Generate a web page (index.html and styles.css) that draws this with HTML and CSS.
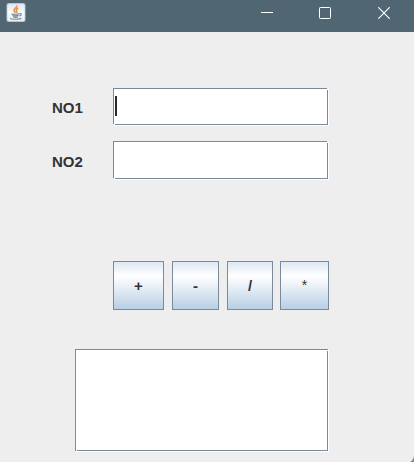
FILE: index.html
```html
<!DOCTYPE html>
<html lang="en">
<head>
<meta charset="utf-8">
<title>Calculator</title>
<link rel="stylesheet" href="styles.css">
</head>
<body>
<div class="window">
  <header class="titlebar">
    <svg class="app-icon" width="20" height="20" viewBox="0 0 20 20">
      <defs><linearGradient id="tile" x1="0" y1="0" x2="0" y2="1"><stop offset="0" stop-color="#dfe6ec"/><stop offset=".5" stop-color="#fafbfc"/><stop offset="1" stop-color="#e8ebed"/></linearGradient></defs>
      <rect x="1" y=".5" width="18" height="18" rx="1.5" fill="url(#tile)" stroke="#bfd0db" stroke-width=".8"/>
      <path d="M10.800 2.500c1 2-3 3-2.800 5 .1 1 1.200 1.500 1.500 2.300M12.300 5.300c-2 .9-2.600 1.900-1.500 3.300.4.5.1.9-.3 1.300" fill="none" stroke="#e8914a" stroke-width="1.600"/>
      <path d="M5.800 10.700c-.5.800 7 .8 7.700 0M6.500 12.300c1.500.8 4.800.7 6 0M7 13.700c1.500.8 3.800.7 5 0M13.700 10.700c2.400-.5 2.100 1.700-.5 2.300" fill="none" stroke="#6488a2" stroke-width="1.100"/>
      <path d="M4.500 15c-.5 1.600 9 1.800 10.800 0" fill="none" stroke="#7895a8" stroke-width="1.100"/>
    </svg>
    <div class="controls">
      <svg width="12" height="12" viewBox="0 0 12 12"><path d="M0 5.500H12" stroke="#fff"/></svg>
      <svg width="12" height="12" viewBox="0 0 12 12"><rect x=".5" y=".5" width="11" height="11" rx=".8" fill="none" stroke="#fff"/></svg>
      <svg width="12" height="12" viewBox="0 0 12 12"><path d="M.3.3 11.700 11.700M11.700.3.3 11.700" stroke="#fff" stroke-width="1.200"/></svg>
    </div>
  </header>
  <main class="content">
    <div class="row first"><span class="label">NO1</span><div class="field"><span class="caret"></span></div></div>
    <div class="row second"><span class="label">NO2</span><div class="field"></div></div>
    <div class="buttons">
      <button>+</button><button>-</button><button>/</button><button class="times">*</button>
    </div>
    <div class="field result"></div>
  </main>
  <svg class="corner" width="4" height="6" viewBox="0 0 4 6"><path d="M4 0Q3.500 4 0 6H4Z" fill="#71868e"/></svg>
</div>
</body>
</html>
```
FILE: styles.css
```css
* { box-sizing: border-box; }
body {
  margin: 0;
  font-family: "Liberation Sans", Arial, sans-serif;
}
.window {
  position: relative;
  width: 414px;
  height: 462px;
  overflow: hidden;
  background: #eee;
}
.titlebar {
  display: flex;
  justify-content: space-between;
  height: 32px;
  padding: 3px 24px 0 6px;
  background: #506672;
}
.controls {
  display: flex;
  gap: 46px;
  padding-top: 4px;
}
.controls svg:nth-child(2) { margin-right: 1px; }
.content { padding: 56px 0 0 52px; }
.row { display: flex; }
.first { height: 37px; margin-bottom: 16px; }
.second { height: 38px; }
.label {
  width: 61px;
  padding-top: 11px;
  font-size: 15px;
  line-height: 17px;
  font-weight: bold;
  color: #333;
}
.second .label { padding-top: 12px; }
.field {
  position: relative;
  width: 215px;
  background: #fff;
  border: 1px solid #7a8a99;
  box-shadow: 1px 1px 0 #fff;
}
/* Bevel notches in the top right and bottom left corners. */
.field::before,
.field::after {
  content: "";
  position: absolute;
  background: #fff;
}
.field::before {
  top: 0;
  right: -1px;
  width: 1px;
  height: 1px;
  box-shadow: 0 -1px 0 #eee;
}
.field::after {
  bottom: -1px;
  left: 0;
  width: 1px;
  height: 1px;
  box-shadow: -1px 0 0 #eee;
}
.field.result::before,
.field.result::after { box-shadow: none; }
.caret {
  display: block;
  width: 2px;
  height: 20px;
  margin: 7px 0 0 1px;
  background: #2b2b2b;
}
.buttons {
  display: flex;
  gap: 8px;
  margin: 82px 0 0 61px;
  height: 49px;
}
.buttons button {
  width: 47px;
  padding: 0;
  border: 1px solid #7a8a99;
  background: linear-gradient(#dde8f3 0%, #fff 30%, #b8cfe5 100%);
  font: bold 15px/17px "Liberation Sans", Arial, sans-serif;
  color: #333;
}
.buttons button:nth-child(1) { width: 51px; }
.buttons button:nth-child(3) { width: 46px; }
.buttons button.times {
  width: 49px;
  margin-left: -1px;
  font-size: 14px;
  font-weight: normal;
}
.result {
  width: 253px;
  height: 102px;
  margin: 39px 0 0 23px;
}
.corner {
  position: absolute;
  right: 0;
  bottom: 0;
}
```
